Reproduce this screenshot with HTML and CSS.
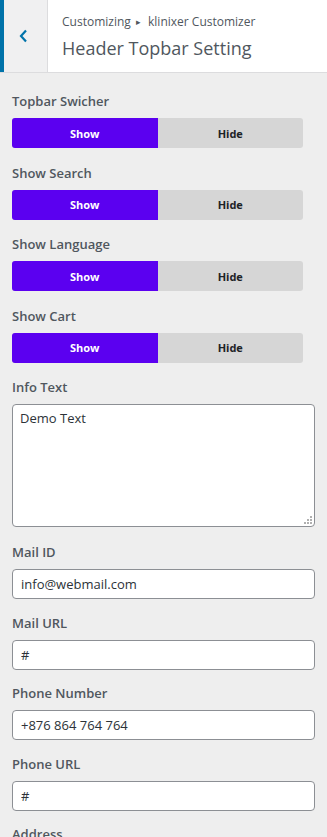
FILE: index.html
```html
<!DOCTYPE html>
<html>
<head>
<meta charset="utf-8">
<link rel="stylesheet" href="styles.css">
</head>
<body>
<header class="head">
  <button class="back" aria-label="Back">
    <svg width="12" height="14" viewBox="0 0 12 14"><polyline points="8,1.5 3,7 8,12.5" fill="none" stroke="#0073aa" stroke-width="2.2"/></svg>
  </button>
  <div class="titles">
    <div class="crumb">Customizing <span class="tri">▸</span> klinixer Customizer</div>
    <h1 class="title">Header Topbar Setting</h1>
  </div>
</header>
<main class="body">
  <div class="group tg">
    <div class="label">Topbar Swicher</div>
    <div class="toggle"><span class="opt on">Show</span><span class="opt">Hide</span></div>
  </div>
  <div class="group tg">
    <div class="label">Show Search</div>
    <div class="toggle"><span class="opt on">Show</span><span class="opt">Hide</span></div>
  </div>
  <div class="group tg">
    <div class="label">Show Language</div>
    <div class="toggle"><span class="opt on">Show</span><span class="opt">Hide</span></div>
  </div>
  <div class="group tg">
    <div class="label">Show Cart</div>
    <div class="toggle"><span class="opt on">Show</span><span class="opt">Hide</span></div>
  </div>
  <div class="group ta">
    <div class="label">Info Text</div>
    <div class="area-wrap">
      <textarea class="area">Demo Text</textarea>
      <svg class="grip" width="8" height="8" viewBox="0 0 8 8" fill="#b0b0b0"><rect x="6" y="0" width="2" height="2"/><rect x="3" y="3" width="2" height="2"/><rect x="6" y="3" width="2" height="2"/><rect x="0" y="6" width="2" height="2"/><rect x="3" y="6" width="2" height="2"/><rect x="6" y="6" width="2" height="2"/></svg>
    </div>
  </div>
  <div class="group">
    <div class="label">Mail ID</div>
    <input class="field" value="info@webmail.com">
  </div>
  <div class="group">
    <div class="label">Mail URL</div>
    <input class="field" value="#">
  </div>
  <div class="group">
    <div class="label">Phone Number</div>
    <input class="field" value="+876 864 764 764">
  </div>
  <div class="group">
    <div class="label">Phone URL</div>
    <input class="field" value="#">
  </div>
  <div class="group">
    <div class="label">Address</div>
  </div>
</main>
</body>
</html>
```
FILE: styles.css
```css
* { box-sizing: border-box; }
html, body { margin: 0; padding: 0; }
body {
  background: #eeeeee;
  font-family: "Open Sans", "Noto Sans", sans-serif;
  color: #50575e;
  overflow: hidden;
}
.head {
  display: flex;
  height: 73px;
  background: #fff;
  border-bottom: 1px solid #dcdcde;
}
.back {
  width: 48px;
  flex: none;
  background: #f0f0f1;
  border: 0;
  border-left: 4px solid #0073aa;
  border-right: 1px solid #dcdcde;
  padding: 0;
  display: flex;
  align-items: center;
  justify-content: center;
  padding-bottom: 1px;
  padding-right: 4px;
}
.titles {
  padding: 13px 0 0 14px;
}
.crumb {
  font-size: 12px;
  line-height: 18px;
  color: #50575e;
}
.tri { font-size: 9px; margin: 0 4px 0 2px; position: relative; top: -1px; }
.title {
  margin: 4px 0 0;
  font-size: 18px;
  font-weight: 400;
  line-height: 24px;
  color: #50575e;
}
.body {
  padding: 18px 12px 0;
}
.group { margin-bottom: 13.5px; }
.group.tg { margin-bottom: 14.5px; }
.group.ta { margin-bottom: 15px; }
.label {
  font-size: 13px;
  font-weight: 600;
  line-height: 20px;
  margin-bottom: 7px;
  color: #50575e;
}
.toggle {
  display: flex;
  width: 291px;
  height: 30px;
  border-radius: 3px;
  overflow: hidden;
  background: #d6d6d6;
}
.opt {
  flex: 1;
  display: flex;
  align-items: center;
  justify-content: center;
  font-size: 11px;
  font-weight: 700;
  color: #1d2327;
}
.opt.on { background: #5b00f0; color: #fff; }
.area-wrap {
  position: relative;
  width: 303px;
}
.grip {
  position: absolute;
  right: 3px;
  bottom: 3px;
}
.area, .field {
  display: block;
  width: 303px;
  border: 1px solid #8c8f94;
  border-radius: 4px;
  background: #fff;
  font-family: "Open Sans", "Noto Sans", sans-serif;
  font-size: 13px;
  color: #2c3338;
  margin: 0;
}
.area {
  height: 123px;
  padding: 3px 7px;
  line-height: 20px;
  resize: none;
}
.field {
  height: 30px;
  padding: 0 8px;
}
```
